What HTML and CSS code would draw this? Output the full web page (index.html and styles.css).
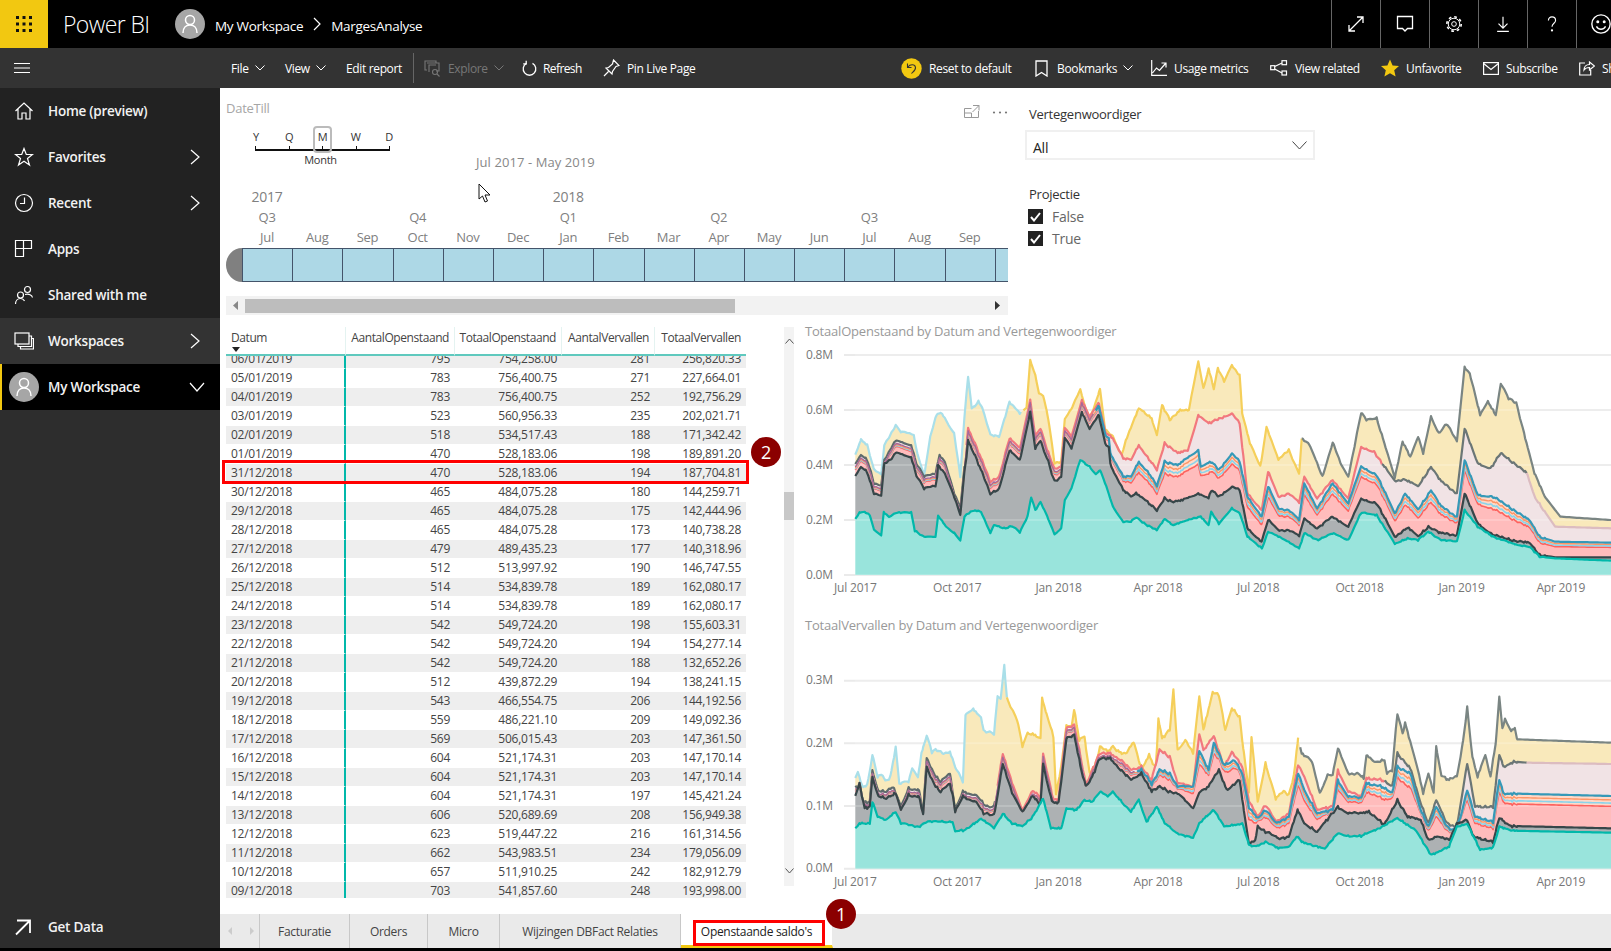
FILE: index.html
```html
<!DOCTYPE html>
<html lang="en">
<head>
<meta charset="utf-8">
<title>Power BI - MargesAnalyse</title>
<link rel="stylesheet" href="styles.css">
</head>
<body>
<div class="app">
  <header class="topbar">
    <div class="waffle">
      <svg width="16" height="16" viewBox="0 0 16 16" fill="#111"><rect x="0" y="0" width="3" height="3"/><rect x="6.5" y="0" width="3" height="3"/><rect x="13" y="0" width="3" height="3"/><rect x="0" y="6.5" width="3" height="3"/><rect x="6.5" y="6.5" width="3" height="3"/><rect x="13" y="6.5" width="3" height="3"/><rect x="0" y="13" width="3" height="3"/><rect x="6.5" y="13" width="3" height="3"/><rect x="13" y="13" width="3" height="3"/></svg>
    </div>
    <div class="topleft">
      <span class="brand">Power BI</span>
      <span class="avatar"><svg width="18" height="20" viewBox="0 0 18 20" fill="none" stroke="#fff" stroke-width="1.5"><circle cx="9" cy="6" r="4.5"/><path d="M2 19c0-5 3-8 7-8s7 3 7 8"/></svg></span>
      <span class="crumb">My Workspace</span>
      <svg class="crumbsep" width="8" height="14" viewBox="0 0 8 14" fill="none" stroke="#fff" stroke-width="1.2"><path d="M1 1l6 6-6 6"/></svg>
      <span class="crumb">MargesAnalyse</span>
    </div>
    <div class="topicons">
      <span class="topicon"><svg width="20" height="20" viewBox="0 0 20 20" fill="none" stroke="#fff" stroke-width="1.3"><path d="M3 17L17 3M11 3h6v6M3 11v6h6"/></svg></span>
      <span class="topicon"><svg width="18" height="18" viewBox="0 0 18 18" fill="none" stroke="#fff" stroke-width="1.3"><path d="M1.500 1.500h15v12h-5l-2.500 2.500-2.500-2.500h-5z"/></svg></span>
      <span class="topicon"><svg width="18" height="18" viewBox="0 0 20 20" fill="none" stroke="#fff"><circle cx="10" cy="10" r="2.600" stroke-width="1.100"/><circle cx="10" cy="10" r="6.400" stroke-width="1.100"/><circle cx="10" cy="10" r="8" stroke-width="1.800" stroke-dasharray="3 3.280"/></svg></span>
      <span class="topicon"><svg width="18" height="20" viewBox="0 0 20 20" fill="none" stroke="#fff" stroke-width="1.300"><path d="M10 2v12M5 9.500l5 5 5-5M3.500 18.200h13"/></svg></span>
      <span class="topicon"><svg width="10" height="18" viewBox="0 0 14 22" fill="none" stroke="#fff" stroke-width="1.600"><path d="M2 6c0-3 2-5 5-5s5 2 5 5c0 4-5 4-5 9"/><circle cx="7" cy="20" r=".8" fill="#fff"/></svg></span>
      <span class="topicon"><svg width="22" height="22" viewBox="0 0 24 24" fill="none" stroke="#fff" stroke-width="1.500"><circle cx="12" cy="12" r="10"/><circle cx="8.500" cy="9.500" r=".9" fill="#fff"/><circle cx="15.500" cy="9.500" r=".9" fill="#fff"/><path d="M7 14.500c1.500 2.500 3 3.200 5 3.200s3.500-.7 5-3.200"/></svg></span>
    </div>
  </header>

  <nav class="toolbar">
    <span class="tool"><svg class="hamburger" width="16" height="10" viewBox="0 0 16 10" fill="none" stroke="#fff"><path d="M0 .5h16M0 5h16M0 9.500h16"/></svg></span>
    <span class="tool">File <svg class="chev" width="10" height="6" viewBox="0 0 10 6"><path d="M.5.500L5 5 9.500.5"/></svg></span>
    <span class="tool">View <svg class="chev" width="10" height="6" viewBox="0 0 10 6"><path d="M.5.500L5 5 9.500.5"/></svg></span>
    <span class="tool">Edit report</span>
    <span class="tooldiv"></span>
    <span class="tool off"><svg width="17" height="17" viewBox="0 0 17 17" fill="none" stroke="#777" stroke-width="1.100"><path d="M3 10H1V1h11v2M3 3h12v8h-3M5 12V5h7"/><circle cx="11" cy="12" r="2.500"/><path d="M13 14l2.500 2.500"/></svg><span>Explore</span><svg class="chev" width="10" height="6" viewBox="0 0 10 6"><path d="M.5.500L5 5 9.500.5"/></svg></span>
    <span class="tool"><svg width="15" height="16" viewBox="0 0 15 16" fill="none" stroke="#fff" stroke-width="1.300"><path d="M4.500 3.400a6.300 6.300 0 1 0 6 0"/><path d="M4.200 .8v3h-3"/></svg><span class="tight">Refresh</span></span>
    <span class="tool"><svg width="17" height="18" viewBox="0 0 17 18" fill="none" stroke="#fff" stroke-width="1.200"><path d="M10.500 1L16 6.500l-3 1-3.500 5-.5 2.500L3 9l2.500-.500 4-3.500zM5.500 12.500L1 17"/></svg><span>Pin Live Page</span></span>
    <span class="tool"><svg width="21" height="21" viewBox="0 0 21 21"><circle cx="10.500" cy="10.500" r="10.200" fill="#f2c811"/><path d="M6.500 5.500v4h4M7 9c2-3 7-3 7.500 .5.300 2.500-2 4-4 6" fill="none" stroke="#333" stroke-width="1.100"/></svg><span>Reset to default</span></span>
    <span class="tool"><svg width="13" height="17" viewBox="0 0 13 17" fill="none" stroke="#fff" stroke-width="1.300"><path d="M1 1h11v15l-5.500-3.500L1 16z"/></svg><span class="gap">Bookmarks</span><svg class="chev" width="10" height="6" viewBox="0 0 10 6"><path d="M.5.500L5 5 9.500.5"/></svg></span>
    <span class="tool"><svg width="16" height="16" viewBox="0 0 16 16" fill="none" stroke="#fff" stroke-width="1.200"><path d="M.7 0v15.300H16M1.500 13l4-5 3 2.500L14.500 3.500M10.500 3H15v4.500"/></svg><span>Usage metrics</span></span>
    <span class="tool"><svg width="18" height="16" viewBox="0 0 18 16" fill="none" stroke="#fff" stroke-width="1.200"><rect x=".7" y="5.700" width="4" height="4"/><rect x="12" y=".7" width="4.500" height="4"/><rect x="12" y="11" width="4.500" height="4"/><path d="M4.700 6.500L12 3M4.700 9l7.300 4"/></svg><span>View related</span></span>
    <span class="tool"><svg width="18" height="18" viewBox="0 0 18 18"><path d="M9 .5l2.600 5.900 6.400.6-4.800 4.300 1.400 6.300L9 14.300l-5.600 3.300 1.400-6.300L0 7l6.400-.6z" fill="#f2c811"/></svg><span>Unfavorite</span></span>
    <span class="tool"><svg width="16" height="13" viewBox="0 0 16 13" fill="none" stroke="#fff" stroke-width="1.200"><rect x=".6" y=".6" width="14.800" height="11.800"/><path d="M.6 1.500L8 7.500l7.400-6"/></svg><span>Subscribe</span></span>
    <span class="tool"><svg width="16" height="16" viewBox="0 0 16 16" fill="none" stroke="#fff" stroke-width="1.200"><path d="M6 3H.7v12h11v-5M5 10c0-3 2-5.500 5.500-5.500V2L15.500 6l-5 4V7.500C8 7.500 6 8.500 5 10z"/></svg><span>Share</span></span>
  </nav>

  <div class="main">
    <aside class="sidebar">
      <a class="navrow"><svg width="20" height="20" viewBox="0 0 20 20" fill="none" stroke="#fff" stroke-width="1.200"><path d="M1.500 10L10 2l8.500 8M4 8v10h4v-6h4v6h4V8"/></svg><span>Home (preview)</span></a>
      <a class="navrow"><svg width="20" height="20" viewBox="0 0 20 20" fill="none" stroke="#fff" stroke-width="1.200"><path d="M10 1.500l2.300 6h6.200l-5 4 2 6.500-5.500-3.800L4.500 18l2-6.500-5-4h6.200z"/></svg><span>Favorites</span><svg class="navchev" width="10" height="16" viewBox="0 0 10 16" fill="none" stroke="#fff" stroke-width="1.200"><path d="M1 1l8 7-8 7"/></svg></a>
      <a class="navrow"><svg width="20" height="20" viewBox="0 0 20 20" fill="none" stroke="#fff" stroke-width="1.200"><circle cx="10" cy="10" r="8.500"/><path d="M10.500 4.500v6H6"/></svg><span>Recent</span><svg class="navchev" width="10" height="16" viewBox="0 0 10 16" fill="none" stroke="#fff" stroke-width="1.200"><path d="M1 1l8 7-8 7"/></svg></a>
      <a class="navrow"><svg width="20" height="20" viewBox="0 0 20 20" fill="none" stroke="#fff" stroke-width="1.200"><path d="M1.500 1.500h8v8h-8zM9.500 1.500h8v8h-8zM1.500 9.500h8v8h-8z"/></svg><span>Apps</span></a>
      <a class="navrow"><svg width="20" height="20" viewBox="0 0 20 20" fill="none" stroke="#fff" stroke-width="1.200"><circle cx="6.500" cy="10" r="3"/><circle cx="13.500" cy="4.500" r="3"/><path d="M1.500 19c0-3 2-5.500 5-5.500S10 15 10.500 16M11 9.500c4-1 7 .5 7.500 3"/></svg><span>Shared with me</span></a>
      <a class="navrow navrow-light"><svg width="20" height="20" viewBox="0 0 20 20" fill="none" stroke="#fff" stroke-width="1.200"><rect x="1" y="2" width="14" height="11"/><path d="M15 5h2.500v10.500H4V13M17.500 7.500H19.500V18H6.500v-2.500"/></svg><span>Workspaces</span><svg class="navchev" width="10" height="16" viewBox="0 0 10 16" fill="none" stroke="#fff" stroke-width="1.200"><path d="M1 1l8 7-8 7"/></svg></a>
      <a class="navrow navrow-active"><span class="avatar avatar-nav"><svg width="18" height="20" viewBox="0 0 18 20" fill="none" stroke="#fff" stroke-width="1.500"><circle cx="9" cy="6" r="4.500"/><path d="M2 19c0-5 3-8 7-8s7 3 7 8"/></svg></span><span>My Workspace</span><svg class="navchev navchev-down" width="16" height="10" viewBox="0 0 16 10" fill="none" stroke="#fff" stroke-width="1.200"><path d="M1 1l7 8 7-8"/></svg></a>
      <a class="navrow getdata"><svg width="18" height="18" viewBox="0 0 18 18" fill="none" stroke="#fff" stroke-width="1.800"><path d="M2 16.500L15.500 3M3 2.500h13V15"/></svg><span>Get Data</span></a>
    </aside>

    <section class="report">
      <div class="toprow">
        <div class="slicer">
          <div class="slicer-head">
            <span class="slicer-title">DateTill</span>
            <svg class="focus" width="16" height="13" viewBox="0 0 16 13" fill="none" stroke="#999"><path d="M.5 3.500h7M.5 3.500v9h14V6M.5 8h7v4.500M9 .5h6v5M15 .5L8.500 7"/></svg>
            <svg class="dots" width="16" height="3" viewBox="0 0 16 3" fill="#777"><circle cx="2" cy="1.500" r="1.100"/><circle cx="8" cy="1.500" r="1.100"/><circle cx="14" cy="1.500" r="1.100"/></svg>
          </div>
          <div class="gran-row">
            <div class="gran">
              <div class="gran-letters"><span>Y</span><span>Q</span><span>M</span><span>W</span><span>D</span></div>
              <div class="gran-axis"><i></i><i></i><i></i><i></i><i></i></div>
              <div class="gran-label">Month</div>
              <div class="gran-box"></div>
            </div>
            <div class="range">Jul 2017 - May 2019</div>
          </div>
          <div class="scale">
            <span class="y">2017</span><span class="c7 y">2018</span>
            <span class="r2">Q3</span><span class="r2 c4">Q4</span><span class="r2 c7">Q1</span><span class="r2 c10">Q2</span><span class="r2 c13">Q3</span>
            <span class="r3">Jul</span><span class="r3">Aug</span><span class="r3">Sep</span><span class="r3">Oct</span><span class="r3">Nov</span><span class="r3">Dec</span><span class="r3">Jan</span><span class="r3">Feb</span><span class="r3">Mar</span><span class="r3">Apr</span><span class="r3">May</span><span class="r3">Jun</span><span class="r3">Jul</span><span class="r3">Aug</span><span class="r3">Sep</span>
          </div>
          <div class="timeline"><span class="cap"></span><i></i><i></i><i></i><i></i><i></i><i></i><i></i><i></i><i></i><i></i><i></i><i></i><i></i><i></i><i></i><i></i></div>
          <div class="hscroll"><svg width="5" height="9" viewBox="0 0 5 9" fill="#888"><path d="M5 0v9L0 4.500z"/></svg><span class="hthumb"></span><svg width="5" height="9" viewBox="0 0 5 9" fill="#333"><path d="M0 0v9l5-4.500z"/></svg></div>
        </div>
        <div class="filters">
          <div class="flabel">Vertegenwoordiger</div>
          <div class="dropdown"><span>All</span><svg width="15" height="9" viewBox="0 0 15 9" fill="none" stroke="#444"><path d="M.5.500l7 7.500 7-7.500"/></svg></div>
          <div class="flabel flabel-2">Projectie</div>
          <div class="check"><span class="box"><svg width="11" height="10" viewBox="0 0 11 10" fill="none" stroke="#fff" stroke-width="2"><path d="M1 5l3 3.500L10 1"/></svg></span>False</div>
          <div class="check"><span class="box"><svg width="11" height="10" viewBox="0 0 11 10" fill="none" stroke="#fff" stroke-width="2"><path d="M1 5l3 3.500L10 1"/></svg></span>True</div>
        </div>
      </div>

      <div class="bottomrow">
        <div class="tablepane">
          <div class="tableblock">
            <table class="grid head">
              <colgroup><col class="c-a"><col class="c-b"><col class="c-c"><col class="c-d"><col class="c-e"></colgroup>
              <thead><tr><th class="left">Datum<i class="sort"></i></th><th>AantalOpenstaand</th><th>TotaalOpenstaand</th><th>AantalVervallen</th><th>TotaalVervallen</th></tr></thead>
            </table>
            <div class="tbody-clip">
              <table class="grid body">
                <colgroup><col class="c-a"><col class="c-b"><col class="c-c"><col class="c-d"><col class="c-e"></colgroup>
                <tbody>
                  <tr><td>06/01/2019</td><td>795</td><td>754,258.00</td><td>281</td><td>256,820.33</td></tr>
                  <tr><td>05/01/2019</td><td>783</td><td>756,400.75</td><td>271</td><td>227,664.01</td></tr>
                  <tr><td>04/01/2019</td><td>783</td><td>756,400.75</td><td>252</td><td>192,756.29</td></tr>
                  <tr><td>03/01/2019</td><td>523</td><td>560,956.33</td><td>235</td><td>202,021.71</td></tr>
                  <tr><td>02/01/2019</td><td>518</td><td>534,517.43</td><td>188</td><td>171,342.42</td></tr>
                  <tr><td>01/01/2019</td><td>470</td><td>528,183.06</td><td>198</td><td>189,891.20</td></tr>
                  <tr><td>31/12/2018</td><td>470</td><td>528,183.06</td><td>194</td><td>187,704.81</td></tr>
                  <tr><td>30/12/2018</td><td>465</td><td>484,075.28</td><td>180</td><td>144,259.71</td></tr>
                  <tr><td>29/12/2018</td><td>465</td><td>484,075.28</td><td>175</td><td>142,444.96</td></tr>
                  <tr><td>28/12/2018</td><td>465</td><td>484,075.28</td><td>173</td><td>140,738.28</td></tr>
                  <tr><td>27/12/2018</td><td>479</td><td>489,435.23</td><td>177</td><td>140,318.96</td></tr>
                  <tr><td>26/12/2018</td><td>512</td><td>513,997.92</td><td>190</td><td>146,747.55</td></tr>
                  <tr><td>25/12/2018</td><td>514</td><td>534,839.78</td><td>189</td><td>162,080.17</td></tr>
                  <tr><td>24/12/2018</td><td>514</td><td>534,839.78</td><td>189</td><td>162,080.17</td></tr>
                  <tr><td>23/12/2018</td><td>542</td><td>549,724.20</td><td>198</td><td>155,603.31</td></tr>
                  <tr><td>22/12/2018</td><td>542</td><td>549,724.20</td><td>194</td><td>154,277.14</td></tr>
                  <tr><td>21/12/2018</td><td>542</td><td>549,724.20</td><td>188</td><td>132,652.26</td></tr>
                  <tr><td>20/12/2018</td><td>512</td><td>439,872.29</td><td>194</td><td>138,241.15</td></tr>
                  <tr><td>19/12/2018</td><td>543</td><td>466,554.75</td><td>206</td><td>144,192.56</td></tr>
                  <tr><td>18/12/2018</td><td>559</td><td>486,221.10</td><td>209</td><td>149,092.36</td></tr>
                  <tr><td>17/12/2018</td><td>569</td><td>506,015.43</td><td>203</td><td>147,361.50</td></tr>
                  <tr><td>16/12/2018</td><td>604</td><td>521,174.31</td><td>203</td><td>147,170.14</td></tr>
                  <tr><td>15/12/2018</td><td>604</td><td>521,174.31</td><td>203</td><td>147,170.14</td></tr>
                  <tr><td>14/12/2018</td><td>604</td><td>521,174.31</td><td>197</td><td>145,421.24</td></tr>
                  <tr><td>13/12/2018</td><td>606</td><td>520,689.69</td><td>208</td><td>156,949.38</td></tr>
                  <tr><td>12/12/2018</td><td>623</td><td>519,447.22</td><td>216</td><td>161,314.56</td></tr>
                  <tr><td>11/12/2018</td><td>662</td><td>543,983.51</td><td>234</td><td>179,056.09</td></tr>
                  <tr><td>10/12/2018</td><td>657</td><td>511,910.25</td><td>242</td><td>182,912.79</td></tr>
                  <tr><td>09/12/2018</td><td>703</td><td>541,857.60</td><td>248</td><td>193,998.00</td></tr>
                </tbody>
              </table>
            </div>
          </div>
          <div class="vscroll">
            <svg class="vup" width="9" height="6" viewBox="0 0 9 6" fill="none" stroke="#555"><path d="M.5 5.500L4.500 1l4 4.500"/></svg>
            <span class="vthumb"></span>
            <svg class="vdown" width="9" height="6" viewBox="0 0 9 6" fill="none" stroke="#555"><path d="M.5.500L4.500 5l4-4.500"/></svg>
          </div>
        </div>
        <div class="charts">
          <svg class="chart" id="chart1" width="811" height="290" viewBox="0 0 811 290"></svg>
          <svg class="chart" id="chart2" width="811" height="290" viewBox="0 0 811 290"></svg>
        </div>
      </div>

      <div class="tabs">
        <div class="tabnav"><svg width="4" height="8" viewBox="0 0 4 8" fill="#ccc"><path d="M4 0v8L0 4z"/></svg><svg width="4" height="8" viewBox="0 0 4 8" fill="#ccc"><path d="M0 0v8l4-4z"/></svg></div>
        <div class="tab">Facturatie</div>
        <div class="tab">Orders</div>
        <div class="tab">Micro</div>
        <div class="tab">Wijzingen DBFact Relaties</div>
        <div class="tab tab-active">Openstaande saldo's</div>
      </div>

      <div class="hl hl-row"></div>
      <div class="hl hl-tab"></div>
      <div class="badge badge-2">2</div>
      <div class="badge badge-1">1</div>
      <svg class="cursor" width="13" height="20" viewBox="0 0 13 20" fill="#fff" stroke="#111"><path d="M1 1v15l3.500-3 2.500 6 2.500-1-2.500-6h5z"/></svg>
    </section>
  </div>
  <div class="footstrip"></div>
</div>
<script src="charts.js"></script>
</body>
</html>
```

FILE: styles.css
```css
* { box-sizing: border-box; }
html, body { margin: 0; padding: 0; height: 100%; overflow: hidden; background: #fff; }
body { font-family: "Open Sans", "Noto Sans", "Liberation Sans", sans-serif; font-size: 12px; color: #333; letter-spacing: -0.25px; }
.app { width: 1611px; height: 951px; display: flex; flex-direction: column; overflow: hidden; }
svg { display: block; flex: none; }

/* top bar */
.topbar { height: 48px; background: #000; display: flex; flex: none; color: #fff; overflow: hidden; }
.waffle { width: 48px; flex: none; background: #f2c811; display: flex; align-items: center; justify-content: center; }
.topleft { flex: 0 0 1283px; display: flex; align-items: center; }
.brand { font-size: 23px; font-weight: 300; margin-left: 15px; width: 112px; letter-spacing: -0.6px; }
.avatar { width: 30px; height: 30px; border-radius: 50%; background: #a6a6a6; display: flex; align-items: center; justify-content: center; flex: none; }
.crumb { font-size: 13.5px; margin-left: 10px; padding-top: 4px; letter-spacing: -0.3px; }
.crumbsep { margin-left: 10px; }
.topicons { display: flex; flex: none; }
.topicon { width: 49px; height: 48px; border-left: 1px solid #666; display: flex; align-items: center; justify-content: center; flex: none; }

/* toolbar */
.toolbar { height: 40px; background: #333; flex: none; color: #fff; overflow: hidden; display: grid; align-items: center; grid-template-columns: 231px 54px 61px 67px 11px 98px 81px 298px 134px 116px 119px 111px 102px 96px 60px; letter-spacing: -0.35px; }
.tool { display: flex; align-items: center; gap: 7px; white-space: nowrap; }
.tool.off { color: #777; }
.tool.off .chev { stroke: #777; }
.chev { fill: none; stroke: #fff; margin-left: -1px; }
.gap { margin-left: 2px; }
.tight { letter-spacing: -0.6px; margin-left: -1px; }
.hamburger { margin-left: 14px; }
.tooldiv { width: 1px; height: 30px; background: #666; }

/* layout */
.main { display: flex; height: 860px; flex: none; }
.footstrip { height: 3px; background: #000; flex: none; }

/* sidebar */
.sidebar { width: 220px; flex: none; background: #2d2d2d; display: flex; flex-direction: column; color: #fff; }
.navrow { height: 46px; flex: none; background: #222; display: flex; align-items: center; position: relative; font-size: 13.5px; font-weight: 600; padding-left: 14px; color: #f2f2f2; }
.navrow > span:not(.avatar) { margin-left: 14px; }
.navchev { position: absolute; left: 190px; top: 15px; }
.navchev-down { left: 187px; top: 18px; }
.navrow-light { background: #333; }
.navrow-active { background: #000; border-left: 2px solid #f2c811; padding-left: 7px; }
.navrow-active > span:not(.avatar) { margin-left: 9px; }
.getdata { margin-top: auto; background: #2d2d2d; padding-top: 3px; }
.getdata > span { margin-left: 16px !important; }
.avatar-nav { width: 30px; height: 30px; }

/* report canvas */
.report { flex: 1; position: relative; display: flex; flex-direction: column; min-width: 0; background: #fff; overflow: hidden; }
.toprow { height: 226px; flex: none; display: flex; }
.slicer { width: 782px; margin-left: 6px; padding-top: 11px; flex: none; }
.slicer-head { height: 19px; display: flex; align-items: flex-start; line-height: 18px; }
.slicer-title { color: #a6a6a6; font-size: 13px; margin-right: auto; }
.focus { margin-top: 6px; }
.dots { margin: 12px 0 0 12px; }
.gran-row { height: 50px; display: flex; align-items: flex-start; }
.gran { width: 145px; margin-left: 24px; padding-top: 10px; position: relative; color: #333; font-size: 11px; flex: none; }
.gran-letters { display: flex; justify-content: space-between; height: 18px; line-height: 18px; }
.gran-letters span { width: 12px; text-align: center; }
.gran-axis { margin: 0 5px 0 5px; height: 5px; border-bottom: 2px solid #111; display: flex; justify-content: space-between; align-items: flex-start; }
.gran-axis i { width: 1px; height: 4px; background: #111; display: block; }
.gran-label { line-height: 16px; margin-top: 1px; text-align: center; padding-right: 4px; }
.gran-box { position: absolute; left: 63px; top: 8px; width: 19px; height: 27px; border: 2px solid #bbb; border-radius: 4px; }
.range { margin: 35px 0 0 81px; color: #888; font-size: 13px; line-height: 18px; white-space: nowrap; letter-spacing: 0.08px; }
.scale { margin-top: 19px; padding-left: 16px; display: grid; grid-template-columns: repeat(15, 50.2px); grid-auto-rows: 20px; color: #808080; font-size: 13px; line-height: 20px; text-align: center; }
.scale .y { grid-row: 1; font-size: 14px; }
.r2 { grid-row: 2; }
.r3 { grid-row: 3; }
.c4 { grid-column: 4; }
.c7 { grid-column: 7; }
.c10 { grid-column: 10; }
.c13 { grid-column: 13; }
.timeline { margin-top: 1px; height: 34px; display: flex; overflow: hidden; }
.cap { width: 16px; flex: none; background: #808080; border-radius: 16px 0 0 16px / 17px 0 0 17px; }
.timeline i { width: 50.2px; flex: none; background: #add8e6; border: solid #44546a; border-width: 1px 0 1px 1px; display: block; }
.hscroll { margin-top: 14px; height: 19px; background: #f2f2f2; display: flex; align-items: center; }
.hscroll svg:first-child { margin-left: 7px; }
.hscroll svg:last-child { margin-left: 260px; }
.hthumb { width: 490px; height: 14px; background: #bdbdbd; margin-left: 7px; }

.filters { width: 290px; margin-left: 17px; padding-top: 17px; flex: none; }
.flabel { font-size: 13px; line-height: 18px; padding-left: 4px; color: #333; }
.flabel-2 { margin-top: 25px; }
.dropdown { margin-top: 7px; height: 30px; border: 2px solid #f0f0f0; display: flex; align-items: center; justify-content: space-between; padding: 4px 6px 0 6px; font-size: 14px; color: #222; }
.dropdown svg { margin-top: -4px; }
.check { display: flex; align-items: center; height: 15px; margin: 6px 0 0 3px; font-size: 14px; color: #666; }
.check + .check { margin-top: 7px; }
.box { width: 15px; height: 15px; background: #222; display: flex; align-items: center; justify-content: center; margin-right: 9px; flex: none; }

/* table */
.bottomrow { height: 600px; flex: none; display: flex; }
.tablepane { width: 574px; margin-left: 6px; padding-top: 13px; display: flex; flex: none; }
.tableblock { width: 520px; flex: none; }
.grid { border-collapse: separate; border-spacing: 0; table-layout: fixed; width: 520px; font-size: 12px; color: #333; }
.c-a { width: 120px; }
.c-b { width: 109px; }
.c-c { width: 107px; }
.c-d { width: 93px; }
.c-e { width: 91px; }
.head th { height: 27px; padding: 2px 5px 7px 0; font-weight: 400; text-align: right; line-height: 18px; border-bottom: 2px solid #5fc9be; border-right: 1px solid #e4f3f1; white-space: nowrap; color: #444; letter-spacing: -0.42px; }
.head th:last-child { border-right: 0; }
.head th.left { text-align: left; padding-left: 5px; position: relative; }
.sort { position: absolute; left: 6px; top: 20px; border: 4px solid transparent; border-top: 5px solid #222; border-bottom: 0; }
.tbody-clip { height: 542px; overflow: hidden; }
.body { margin-top: -6px; }
.body td { height: 19px; padding: 0 5px 0 0; line-height: 18px; text-align: right; border-bottom: 1px solid #fff; white-space: nowrap; overflow: hidden; color: #444; }
.body td:first-child { text-align: left; padding-left: 5px; border-right: 2px solid #01b8aa; }
.body tr:nth-child(odd) td { background: #eee; }
.vscroll { width: 10px; height: 559px; margin-left: 38px; background: #f3f3f3; display: flex; flex-direction: column; align-items: center; flex: none; }
.vup { margin-top: 11px; }
.vthumb { width: 10px; height: 28px; background: #c8c8c8; margin-top: 148px; flex: none; }
.vdown { margin-top: auto; margin-bottom: 12px; }

/* charts */
.charts { width: 811px; flex: none; padding-top: 6px; }
.chart text { font-family: "Open Sans", "Noto Sans", sans-serif; letter-spacing: -0.2px; }
.chart .title { font-size: 13px; fill: #999; }
.chart .axis { font-size: 12px; fill: #777; }

/* tabs */
.tabs { height: 34px; flex: none; background: #eaeaea; display: grid; grid-template-columns: 40px 90px 78px 72px 181px 152px; font-weight: 500; font-size: 12px; color: #444; letter-spacing: -0.3px; }
.tabnav { display: flex; align-items: center; justify-content: center; gap: 18px; border-right: 1px solid #c8c8c8; padding-left: 2px; }
.tab { display: flex; align-items: center; justify-content: center; border-right: 1px solid #c8c8c8; white-space: nowrap; padding-top: 1px; }
.tab-active { background: #fff; border-bottom: 3px solid #f2c811; color: #222; border-right-color: #eaeaea; padding-top: 3px; }

/* overlays */
.hl { position: absolute; border: 3px solid #f00; pointer-events: none; }
.hl-row { left: 2px; top: 372px; width: 527px; height: 24px; }
.hl-tab { left: 473px; top: 832px; width: 132px; height: 26px; }
.badge { position: absolute; width: 30px; height: 30px; border-radius: 50%; background: #8b0000; color: #fff; font-size: 18px; display: flex; align-items: center; justify-content: center; line-height: 1; }
.badge-2 { left: 531px; top: 349px; }
.badge-1 { left: 606px; top: 811px; }
.cursor { position: absolute; left: 258px; top: 95px; }
```

FILE: charts.js
```js
(function () {
  var NS = 'http://www.w3.org/2000/svg';
  function p(s) {
    return s.split(';').map(function (k) { var a = k.split(','); return [+a[0], +a[1]]; });
  }
  function at(keys, x) {
    if (x <= keys[0][0]) return keys[0][1];
    for (var i = 1; i < keys.length; i++) {
      if (x <= keys[i][0]) {
        var a = keys[i - 1], b = keys[i];
        return a[1] + (b[1] - a[1]) * (x - a[0]) / (b[0] - a[0]);
      }
    }
    return keys[keys.length - 1][1];
  }
  var SX = 811 / 1568, SY = 1 / 3;
  function el(svg, name, attrs, text) {
    var e = document.createElementNS(NS, name);
    for (var k in attrs) e.setAttribute(k, attrs[k]);
    if (text) e.textContent = text;
    svg.appendChild(e);
    return e;
  }
  function wobble(x, amp) {
    return amp * (Math.sin(x * 1.37) + 0.7 * Math.sin(x * 0.53 + 1.2) + 0.5 * Math.sin(x * 3.1 + 0.4)) / 2.2;
  }
  function draw(id, d) {
    var svg = document.getElementById(id);
    var T = p(d.T), U = p(d.U), B = p(d.B), D = p(d.D), G = p(d.G);
    var seen = {}, xs = [];
    [T, U, B, D, G].forEach(function (arr) {
      arr.forEach(function (k) { if (!seen[k[0]]) { seen[k[0]] = 1; xs.push(k[0]); } });
    });
    for (var gx = 107; gx <= 1568; gx += 5) if (!seen[gx]) { seen[gx] = 1; xs.push(gx); }
    xs.sort(function (a, b) { return a - b; });
    var rows = xs.map(function (x) {
      var w = x > d.flat ? 0 : wobble(x, d.amp);
      var g = at(G, x) + wobble(x + 40, d.amp) * (x > d.flat ? 0 : 0.7);
      var dd = Math.min(at(D, x) + w, g - 2);
      var u0 = at(U, x) + w;
      if (x < d.bandEnd) dd = Math.min(dd, u0 + d.band);
      var b = x < d.bandEnd ? u0 + 9 : at(B, x) + w;
      b = Math.min(b, dd);
      var u = Math.min(u0, b);
      var t = Math.min(at(T, x) + (x > d.flat ? 0 : wobble(x + 90, d.amp)), u);
      return { x: x, t: t, u: u, b: b, d: dd, g: g, base: d.base,
        o: b + (dd - b) * 0.12, l: b + (dd - b) * 0.22, r: b + (dd - b) * 0.32 };
    });
    function pt(x, y) { return (x * SX).toFixed(1) + ' ' + (y * SY).toFixed(1); }
    function area(hi, lo, fill) {
      var s = 'M' + rows.map(function (r) { return pt(r.x, r[hi]); }).join('L');
      s += 'L' + rows.slice().reverse().map(function (r) { return pt(r.x, r[lo]); }).join('L') + 'Z';
      el(svg, 'path', { d: s, fill: fill });
    }
    function line(key, color, w, from, to) {
      var list = rows.filter(function (r) { return r.x >= (from || 0) && r.x <= (to || 9999); });
      if (list.length < 2) return;
      el(svg, 'path', { d: 'M' + list.map(function (r) { return pt(r.x, r[key]); }).join('L'),
        fill: 'none', stroke: color, 'stroke-width': w, 'stroke-linejoin': 'round' });
    }
    el(svg, 'text', { x: 5, y: d.titleY, 'class': 'title' }, d.title);
    d.ticks.forEach(function (t) {
      el(svg, 'line', { x1: 44, x2: 811, y1: t[1] * SY, y2: t[1] * SY, stroke: '#eaeaea', 'stroke-width': 2 });
      el(svg, 'text', { x: 6, y: t[1] * SY + 3.5, 'class': 'axis' }, t[0]);
    });
    area('t', 'u', '#f9e9bb');
    area('u', 'b', '#f1e3e5');
    area('b', 'r', '#ffd9c8');
    area('r', 'd', '#ffbcbc');
    area('d', 'g', '#adb1b3');
    area('g', 'base', '#99e4dc');
    d.ticks.forEach(function (t) {
      el(svg, 'line', { x1: 55, x2: 811, y1: t[1] * SY, y2: t[1] * SY, stroke: '#fff', 'stroke-opacity': 0.18, 'stroke-width': 2 });
    });
    d.topColors.forEach(function (c) { line('t', c[2], 2.2, c[0], c[1]); });
    d.upColors.forEach(function (c) { line('u', c[2], 2.2, c[0], c[1]); });
    line('r', '#fd625e', 1.6);
    line('l', '#8ad4eb', 1.6);
    line('o', '#fe9666', 1.4);
    line('b', '#a66999', 1.4, 0, d.bandEnd - 30);
    line('b', '#3599b8', 2.2, d.bandEnd - 30);
    line('d', '#374649', 2.2);
    line('g', '#01b8aa', 2.2);
    d.xl.forEach(function (l) {
      el(svg, 'text', { x: l[1] * SX, y: d.xY, 'class': 'axis', 'text-anchor': 'middle' }, l[0]);
    });
  }
  var xl = [['Jul 2017', 107], ['Oct 2017', 304], ['Jan 2018', 500], ['Apr 2018', 692], ['Jul 2018', 886], ['Oct 2018', 1082], ['Jan 2019', 1279], ['Apr 2019', 1471]];
  draw('chart1', {
    title: 'TotaalOpenstaand by Datum and Vertegenwoordiger', titleY: 16, xY: 271.500, base: 765, bandEnd: 600, band: 36, amp: 4, flat: 1440, xl: xl,
    ticks: [['0.8M', 105], ['0.6M', 270], ['0.4M', 435], ['0.2M', 600], ['0.0M', 765]],
    topColors: [[0, 430, '#a9dfe9'], [430, 970, '#f5cf5a'], [970, 9999, '#7a8583']],
    upColors: [[0, 320, '#5f6b6d'], [320, 1125, '#f2787e'], [1125, 1405, '#6b7676'], [1405, 9999, '#dcbcc0']],
    T: '107,405;118,358;130,375;143,450;157,465;163,375;185,315;195,335;220,345;225,390;240,465;252,350;265,280;275,282;298,340;310,470;318,290;325,170;332,265;345,245;352,260;368,345;385,350;405,245;425,280;438,265;445,120;455,165;462,220;470,225;480,295;492,430;505,425;512,295;525,265;542,210;550,255;560,300;580,208;590,330;605,350;622,410;630,360;655,265;680,295;690,345;700,255;715,300;735,270;752,270;770,125;780,205;790,145;800,205;808,145;820,185;835,135;850,165;855,280;870,370;890,440;902,320;925,420;945,390;965,460;970,355;985,375;1000,430;1010,470;1030,368;1045,430;1060,470;1085,278;1095,300;1115,295;1130,370;1150,475;1165,365;1180,410;1195,350;1205,400;1220,290;1235,340;1250,310;1270,365;1285,140;1295,160;1315,285;1330,245;1345,285;1355,190;1370,235;1385,250;1400,340;1420,460;1440,530;1470,590;1568,600',
    U: '107,430;118,405;130,420;143,490;157,495;163,420;185,362;215,375;225,430;240,470;262,460;270,405;280,425;298,520;310,565;325,325;345,395;368,485;385,470;405,355;425,385;445,240;455,350;465,325;478,390;492,445;505,440;512,325;525,350;545,240;560,290;578,250;590,335;605,355;625,415;640,420;655,375;690,450;705,370;730,398;750,392;770,285;790,310;835,280;850,310;865,520;893,570;905,455;925,530;945,520;965,548;975,470;1000,535;1030,480;1060,535;1085,382;1110,395;1125,430;1150,482;1170,478;1195,500;1220,440;1240,485;1270,520;1285,325;1310,430;1335,445;1355,400;1405,458;1420,530;1460,620;1568,625',
    B: '600,400;625,470;640,470;655,425;675,460;690,498;705,425;730,435;770,390;775,440;795,425;810,450;835,400;850,425;865,530;893,590;905,500;925,565;945,570;965,600;975,490;1000,565;1030,490;1060,550;1085,440;1115,465;1150,580;1170,520;1195,570;1220,510;1240,560;1270,590;1285,420;1310,525;1340,530;1380,570;1410,600;1430,650;1460,665;1568,668',
    D: '107,470;118,447;130,460;143,520;157,525;163,430;185,410;215,418;225,490;240,530;262,535;267,435;280,460;298,530;310,585;318,450;330,435;345,460;368,545;385,525;405,510;425,430;440,420;447,360;455,430;465,375;478,415;492,485;505,470;512,355;525,385;542,295;560,325;572,345;580,325;590,395;605,450;625,510;640,530;650,520;665,535;690,572;705,535;720,545;740,540;770,520;790,535;795,510;810,530;835,500;850,510;865,625;893,665;905,600;925,630;945,630;965,648;975,595;1000,625;1030,590;1060,620;1085,537;1115,550;1150,650;1175,622;1195,650;1215,620;1240,640;1270,645;1285,520;1310,610;1340,645;1380,662;1410,668;1430,705;1460,712;1568,712',
    G: '107,597;115,577;125,575;135,585;143,630;157,647;162,575;172,590;185,578;215,578;222,632;240,650;262,652;267,587;280,615;298,640;310,662;318,590;330,575;338,570;350,575;368,640;375,615;395,625;410,618;425,637;440,590;447,530;455,570;465,545;478,590;492,643;505,625;512,540;525,505;542,420;560,440;572,463;580,450;590,490;605,560;625,605;640,605;650,592;665,610;690,630;705,597;720,615;740,605;775,590;790,615;795,575;810,612;835,565;850,578;865,650;893,685;905,635;925,650;945,665;965,685;975,640;1000,660;1030,640;1060,660;1085,578;1115,585;1150,672;1175,655;1195,660;1215,635;1240,660;1270,665;1285,570;1310,620;1340,650;1380,672;1410,680;1430,710;1460,715;1568,722'
  });
  draw('chart2', {
    title: 'TotaalVervallen by Datum and Vertegenwoordiger', titleY: 20, xY: 275.500, base: 776, bandEnd: 680, band: 30, amp: 5, flat: 1386, xl: xl,
    ticks: [['0.3M', 212], ['0.2M', 400], ['0.1M', 588], ['0.0M', 776]],
    topColors: [[0, 400, '#a9dfe9'], [400, 965, '#f5cf5a'], [965, 9999, '#7a8583']],
    upColors: [[0, 380, '#5f6b6d'], [380, 1130, '#f2787e'], [1130, 1405, '#6b7676'], [1405, 9999, '#dcbcc0']],
    T: '107,505;112,485;120,530;130,525;140,435;150,500;160,495;165,515;175,500;185,410;192,520;210,515;217,475;228,500;235,430;245,375;255,425;265,420;275,430;290,425;300,470;315,515;320,315;335,298;350,320;355,362;375,372;382,260;388,265;395,165;400,265;420,330;430,410;440,370;455,375;465,385;468,262;475,305;490,380;495,555;505,470;515,345;525,350;530,298;540,390;550,380;560,490;570,480;580,410;595,425;605,410;615,425;630,430;645,395;660,480;675,435;688,480;693,325;700,385;715,360;722,240;730,420;745,390;760,430;772,260;780,360;798,245;810,255;822,360;835,295;850,320;855,390;868,550;873,380;885,575;900,460;920,565;935,545;945,555;955,495;963,385;970,430;990,455;1005,550;1020,495;1030,495;1040,415;1060,490;1080,490;1090,505;1095,435;1110,455;1130,450;1135,490;1145,480;1155,310;1165,370;1170,340;1190,450;1205,550;1215,490;1225,550;1230,410;1240,495;1255,510;1270,500;1280,415;1290,292;1300,440;1310,500;1325,435;1335,500;1345,400;1352,260;1358,355;1363,330;1375,365;1382,352;1386,388;1568,398',
    U: '107,525;120,580;135,575;140,480;150,540;165,545;180,530;195,590;210,535;230,540;238,610;245,445;255,480;270,515;290,490;300,600;315,545;340,555;360,590;375,590;392,430;410,520;430,600;450,540;465,565;470,432;490,570;500,565;515,355;525,350;530,345;540,420;553,525;565,480;580,430;600,430;620,450;640,480;660,470;680,510;695,420;715,440;730,520;760,530;772,370;780,420;800,380;820,470;835,425;855,470;868,570;885,620;900,585;920,635;945,610;963,465;975,500;1000,600;1030,590;1040,480;1060,545;1085,560;1095,505;1125,510;1145,530;1155,430;1180,475;1200,580;1215,640;1230,570;1250,640;1270,650;1290,460;1305,590;1340,590;1352,435;1360,470;1380,455;1405,458;1568,462',
    B: '680,525;695,480;715,490;730,530;760,530;772,420;790,480;800,400;820,465;840,450;855,490;868,590;885,625;900,600;920,640;945,620;963,490;975,540;1000,610;1030,600;1040,510;1060,560;1085,565;1095,520;1125,530;1145,550;1155,470;1180,490;1200,600;1215,650;1230,590;1250,650;1270,665;1290,540;1305,620;1340,635;1352,510;1360,550;1568,558',
    D: '107,558;115,520;125,595;135,590;140,500;150,555;165,565;185,550;195,600;210,555;230,560;238,612;245,470;255,520;270,550;295,550;300,605;315,560;340,575;355,610;375,615;392,480;410,550;430,605;450,555;465,590;470,500;490,580;500,575;515,395;525,410;540,460;553,530;565,500;580,445;600,445;620,480;640,510;660,490;680,545;695,530;715,545;730,550;760,595;772,545;790,530;810,480;825,540;850,510;858,600;868,700;880,690;885,650;900,665;925,685;945,680;962,600;975,640;1000,665;1040,590;1060,610;1085,610;1100,605;1130,645;1155,570;1175,620;1200,630;1215,690;1230,680;1255,690;1270,640;1290,630;1300,680;1340,695;1352,625;1375,648;1568,655',
    G: '107,655;115,640;135,640;140,575;150,620;165,630;185,605;195,640;230,650;245,635;295,635;300,665;320,660;350,625;375,655;392,610;410,640;430,650;450,620;470,565;485,655;505,655;515,595;535,600;550,570;565,575;580,545;595,560;605,545;630,590;640,605;655,570;670,635;690,590;705,640;730,670;760,685;772,640;785,620;800,600;820,650;855,640;868,705;880,710;900,695;925,715;945,710;960,680;975,700;1015,715;1040,670;1060,678;1085,678;1125,650;1155,625;1190,660;1220,735;1255,710;1270,650;1290,640;1315,720;1340,712;1352,650;1375,662;1568,668'
  });
})();
```
